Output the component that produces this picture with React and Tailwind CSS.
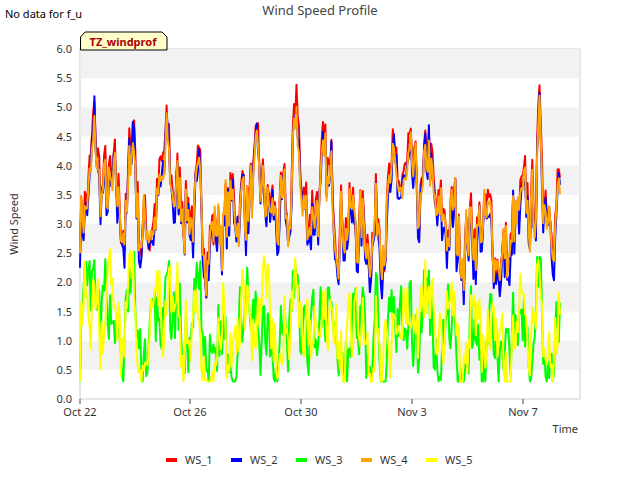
import React from "react";

function rng(seed) {
  let s = seed;
  return () => {
    s = (s * 16807) % 2147483647;
    return (s - 1) / 2147483646;
  };
}

const N = 400;
const X0 = 80, X1 = 560, Y0 = 399, PX = 58.33;
const peaks = [[0.03, 0.9], [0.11, 2.0], [0.18, 0.8], [0.45, 2.4], [0.725, 1.4], [0.955, 1.1]];

function base() {
  const r = rng(7);
  const out = [];
  let n = 0;
  for (let i = 0; i < N; i++) {
    const t = i / N;
    n = n * 0.6 + (r() - 0.5) * 1.3;
    let v = 3.2 + 0.35 * Math.sin(t * 40) + n;
    for (const [p, h] of peaks) v += h * Math.exp(-((t - p) ** 2) / 0.00006);
    if (t > 0.78 && t < 0.9) v -= 0.6;
    out.push(v);
  }
  return out;
}
const B = base();

function series(seed, scale, off, noise) {
  const r = rng(seed);
  return B.map((v) => Math.max(0.3, Math.min(6, (v - 3.2) * scale + 3.2 + off + (r() - 0.5) * noise)));
}
function low(seed, lvl) {
  const r = rng(seed);
  let n = 0;
  return B.map((v, i) => {
    n = n * 0.5 + (r() - 0.5) * 1.2;
    return Math.max(0.3, Math.min(4, lvl + (v - 3.2) * 0.45 + n + 0.3 * Math.sin(i / 3)));
  });
}

const data = [
  ["#ff0000", series(11, 1, 0.1, 0.3)],
  ["#0000ff", series(12, 1, -0.1, 0.4)],
  ["#00ff00", low(13, 1.1)],
  ["#ffa500", series(14, 0.85, 0, 0.3)],
  ["#ffff00", low(15, 1.2)],
];

const pts = (arr) =>
  arr.map((v, i) => `${(X0 + (i / (N - 1)) * (X1 - X0)).toFixed(1)},${(Y0 - v * PX).toFixed(1)}`).join(" ");

const yt = [0, 0.5, 1, 1.5, 2, 2.5, 3, 3.5, 4, 4.5, 5, 5.5, 6];
const xt = [["Oct 22", 80], ["Oct 26", 190], ["Oct 30", 301], ["Nov 3", 412], ["Nov 7", 523]];

export default function App() {
  return (
    <div className="w-[640px] h-[480px] bg-white font-['DejaVu_Sans',sans-serif]">
      <svg width="640" height="480" className="block font-['DejaVu_Sans',sans-serif]">
        <text x="5" y="18" fontSize="11" fill="#000">No data for f_u</text>
        <text x="320" y="15" fontSize="13" fill="#444" textAnchor="middle">Wind Speed Profile</text>
        <rect x="80" y="49" width="500" height="350" fill="#fff" stroke="#ccc" />
        {[1, 3, 5, 7, 9, 11].map((k) => (
          <rect key={k} x="80.5" y={Y0 - (k + 1) * 0.5 * PX} width="499" height={0.5 * PX} fill="#f2f2f2" />
        ))}
        {yt.map((v) => (
          <text key={v} x="72" y={Y0 - v * PX + 4} fontSize="11" fill="#333" textAnchor="end">{v.toFixed(1)}</text>
        ))}
        {xt.map(([l, x]) => (
          <g key={l}>
            <line x1={x} x2={x} y1="399" y2="404" stroke="#444" />
            <text x={x} y="416" fontSize="11" fill="#333" textAnchor="middle">{l}</text>
          </g>
        ))}
        <text x="578" y="433" fontSize="11" fill="#333" textAnchor="end">Time</text>
        <text x="18" y="224" fontSize="11" fill="#333" textAnchor="middle" transform="rotate(-90 18 224)">Wind Speed</text>
        {data.map(([c, a], i) => (
          <polyline key={i} points={pts(a)} fill="none" stroke={c} strokeWidth="2" strokeLinejoin="round" />
        ))}
        <path d="M80.5 50 V37 L85 32 H162 L167 37 V50 Z" fill="#ffffcc" stroke="#000" />
        <text x="123" y="46" fontSize="11" fontWeight="bold" fill="#aa0000" textAnchor="middle">TZ_windprof</text>
        {[["WS_1", "#ff0000", 166], ["WS_2", "#0000ff", 231], ["WS_3", "#00ff00", 296], ["WS_4", "#ffa500", 361], ["WS_5", "#ffff00", 426]].map(([l, c, x]) => (
          <g key={l}>
            <rect x={x} y="458" width="11" height="4" fill={c} />
            <text x={x + 19} y="464" fontSize="11" fill="#333">{l}</text>
          </g>
        ))}
      </svg>
    </div>
  );
}
